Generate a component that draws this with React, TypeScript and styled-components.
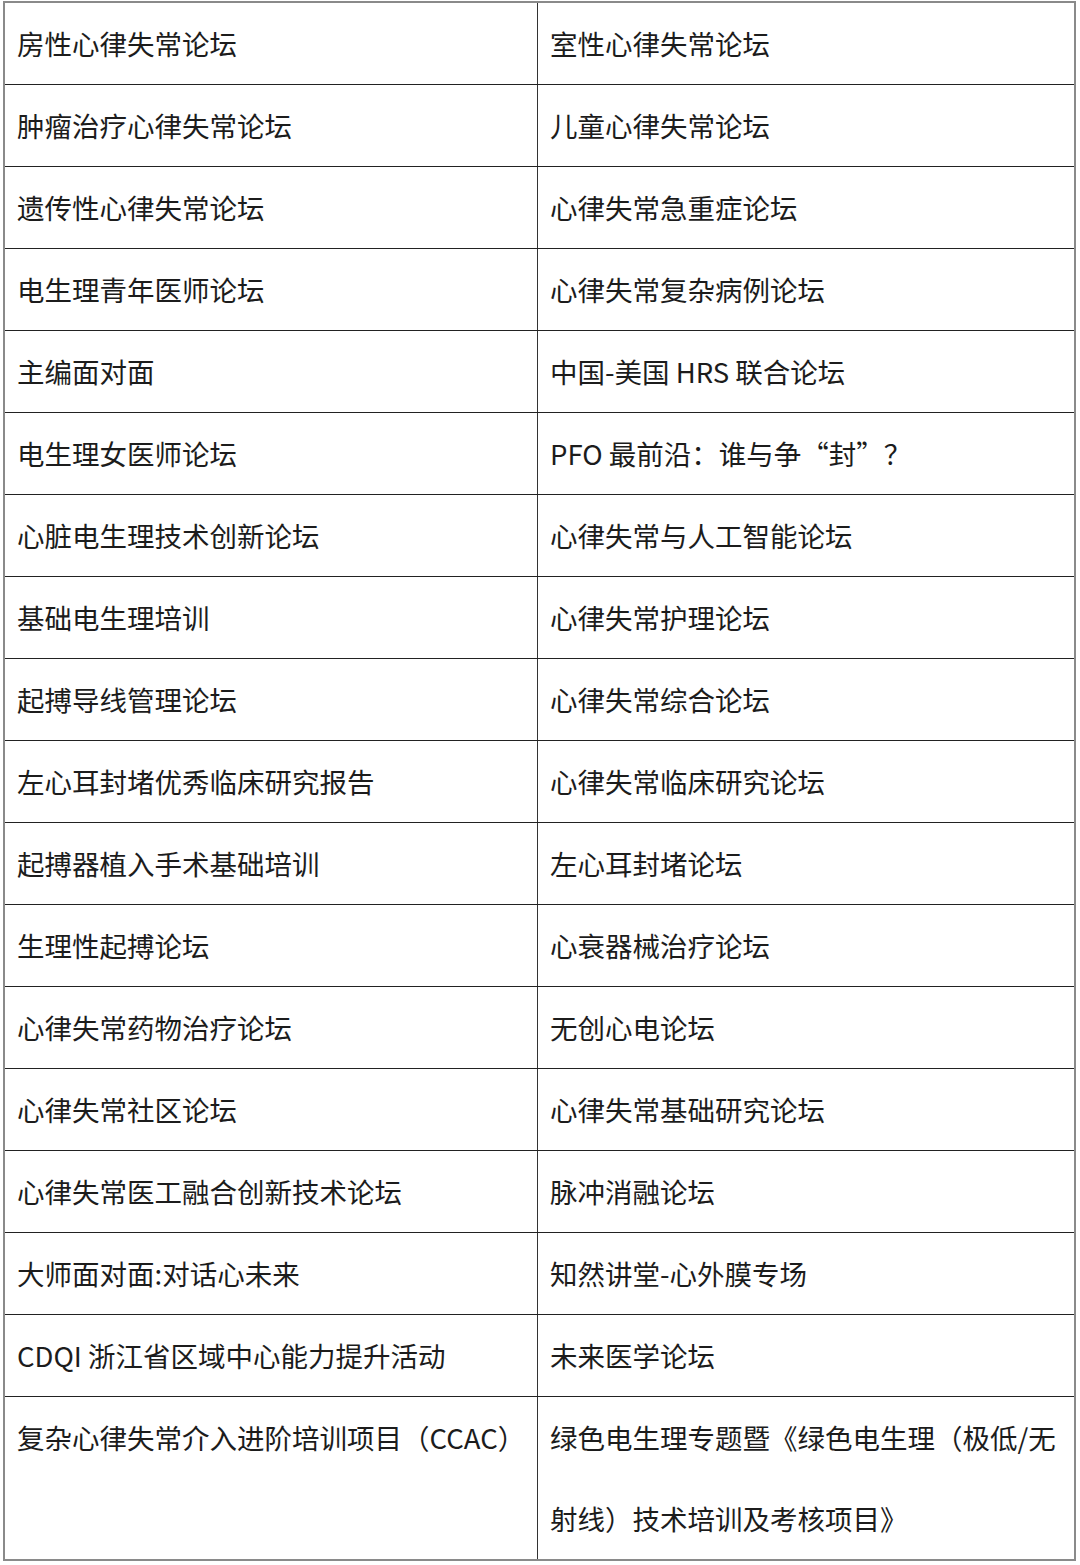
import React from "react";
import styled, { createGlobalStyle } from "styled-components";

const GlobalStyle = createGlobalStyle`
  html, body {
    margin: 0;
    padding: 0;
    background: #ffffff;
  }
  body {
    font-family: "Noto Sans CJK SC", "Noto Sans", sans-serif;
  }
`;

const Page = styled.div`
  width: 1080px;
  padding: 1px 0 0 3px;
  box-sizing: border-box;
`;

const Table = styled.table`
  width: 1073px;
  border-collapse: collapse;
  table-layout: fixed;
  border: 2px solid #8a8a8a;
`;

const Cell = styled.td<{ $left?: boolean }>`
  width: ${(p) => (p.$left ? "508px" : "auto")};
  height: 81px;
  padding: 0 12px 0 12px;
  vertical-align: top;
  border-top: 1px solid #222;
  border-bottom: 1px solid #222;
  border-right: ${(p) => (p.$left ? "1px solid #333" : "none")};
  font-size: 27.5px;
  line-height: 81px;
  color: #1c1c1c;
`;

const rows: [string, string][] = [
  ["房性心律失常论坛", "室性心律失常论坛"],
  ["肿瘤治疗心律失常论坛", "儿童心律失常论坛"],
  ["遗传性心律失常论坛", "心律失常急重症论坛"],
  ["电生理青年医师论坛", "心律失常复杂病例论坛"],
  ["主编面对面", "中国-美国 HRS 联合论坛"],
  ["电生理女医师论坛", "PFO 最前沿：谁与争“封”？"],
  ["心脏电生理技术创新论坛", "心律失常与人工智能论坛"],
  ["基础电生理培训", "心律失常护理论坛"],
  ["起搏导线管理论坛", "心律失常综合论坛"],
  ["左心耳封堵优秀临床研究报告", "心律失常临床研究论坛"],
  ["起搏器植入手术基础培训", "左心耳封堵论坛"],
  ["生理性起搏论坛", "心衰器械治疗论坛"],
  ["心律失常药物治疗论坛", "无创心电论坛"],
  ["心律失常社区论坛", "心律失常基础研究论坛"],
  ["心律失常医工融合创新技术论坛", "脉冲消融论坛"],
  ["大师面对面:对话心未来", "知然讲堂-心外膜专场"],
  ["CDQI 浙江省区域中心能力提升活动", "未来医学论坛"],
  [
    "复杂心律失常介入进阶培训项目（CCAC）",
    "绿色电生理专题暨《绿色电生理（极低/无射线）技术培训及考核项目》",
  ],
];

export default function App() {
  return (
    <Page>
      <GlobalStyle />
      <Table>
        <tbody>
          {rows.map(([left, right]) => (
            <tr key={left}>
              <Cell $left>{left}</Cell>
              <Cell>{right}</Cell>
            </tr>
          ))}
        </tbody>
      </Table>
    </Page>
  );
}
